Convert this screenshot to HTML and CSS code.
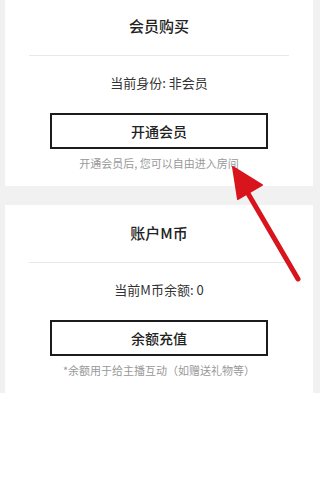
FILE: index.html
```html
<!DOCTYPE html>
<html lang="zh-CN">
<head>
    <meta charset="UTF-8">
    <meta name="viewport" content="width=device-width, initial-scale=1.0">
    <title>会员购买</title>
    <link rel="stylesheet" href="styles.css">
</head>
<body>
    <div class="page">
        <div class="card card-first">
            <h2 class="card-title">会员购买</h2>
            <p class="status">当前身份: 非会员</p>
            <button class="action-btn">开通会员</button>
            <p class="note">开通会员后, 您可以自由进入房间</p>
        </div>
        <div class="card">
            <h2 class="card-title">账户M币</h2>
            <p class="status">当前M币余额: 0</p>
            <button class="action-btn">余额充值</button>
            <p class="note">*余额用于给主播互动（如赠送礼物等）</p>
        </div>
    </div>

    <svg class="arrow" width="320" height="498" viewBox="0 0 320 498">
        <line x1="298" y1="279" x2="246" y2="190" stroke="#d8141c" stroke-width="5" stroke-linecap="round"/>
        <polygon points="233,167 262,185 238,199" fill="#d8141c" stroke="#d8141c" stroke-width="2" stroke-linejoin="round"/>
    </svg>
</body>
</html>
```

FILE: styles.css
```css
body {
    margin: 0;
    background-color: #ffffff;
    font-family: "Noto Sans CJK SC", "Noto Sans", sans-serif;
    color: #222;
}

.page {
    background-color: #f1f1f1;
    padding: 0 7px 0 5px;
    display: flex;
    flex-direction: column;
    gap: 19px;
}

.card {
    background-color: #ffffff;
    padding: 17px 0 15px;
    display: flex;
    flex-direction: column;
    align-items: center;
}

.card-first {
    margin-top: -2px;
}

.card-title {
    margin: 0;
    align-self: stretch;
    text-align: center;
    font-size: 15px;
    font-weight: 500;
    line-height: 22px;
    padding-bottom: 18px;
    margin: 0 24px;
    border-bottom: 1px solid #e8e8e8;
}

.status {
    margin: 17px 0 0;
    font-size: 13px;
    line-height: 20px;
    color: #333;
}

.action-btn {
    margin-top: 20px;
    width: 218px;
    height: 36px;
    background: #fff;
    border: 2px solid #1c1c1c;
    font-family: inherit;
    font-size: 14px;
    font-weight: 500;
    color: #222;
    cursor: pointer;
}

.note {
    margin: 6px 0 0;
    font-size: 11px;
    line-height: 16px;
    color: #999;
}

.arrow {
    position: absolute;
    left: 0;
    top: 0;
    pointer-events: none;
}
```
